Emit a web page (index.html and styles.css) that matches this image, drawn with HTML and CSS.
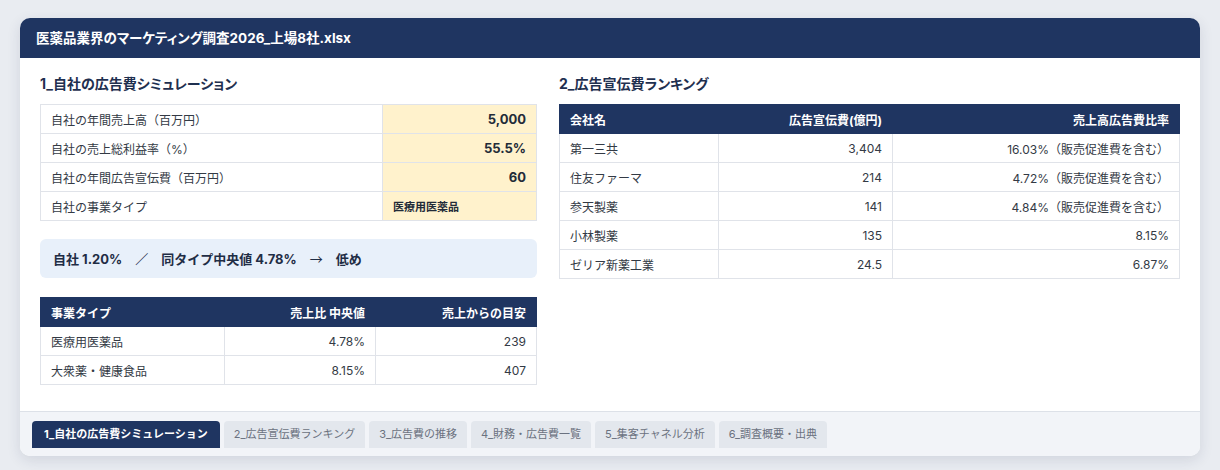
FILE: index.html
```html
<!DOCTYPE html>
<html lang="ja">
<head>
    <meta charset="UTF-8">
    <title>医薬品業界のマーケティング調査2026_上場8社.xlsx</title>
    <link rel="stylesheet" href="styles.css">
</head>
<body>
    <div class="book">
        <div class="book-title">医薬品業界のマーケティング調査2026_上場8社.xlsx</div>

        <div class="sheet">
            <div class="col-left">
                <h2>1_自社の広告費シミュレーション</h2>
                <table class="grid input-table">
                    <tr><td>自社の年間売上高（百万円）</td><td class="input num">5,000</td></tr>
                    <tr><td>自社の売上総利益率（%）</td><td class="input num">55.5%</td></tr>
                    <tr><td>自社の年間広告宣伝費（百万円）</td><td class="input num">60</td></tr>
                    <tr><td>自社の事業タイプ</td><td class="input small">医療用医薬品</td></tr>
                </table>

                <div class="callout">自社 1.20%<span class="sep">　／　</span>同タイプ中央値 4.78%<span class="sep arrow">　→　</span>低め</div>

                <table class="grid type-table">
                    <thead>
                        <tr><th>事業タイプ</th><th class="num">売上比 中央値</th><th class="num">売上からの目安</th></tr>
                    </thead>
                    <tbody>
                        <tr><td>医療用医薬品</td><td class="num">4.78%</td><td class="num">239</td></tr>
                        <tr><td>大衆薬・健康食品</td><td class="num">8.15%</td><td class="num">407</td></tr>
                    </tbody>
                </table>
            </div>

            <div class="col-right">
                <h2>2_広告宣伝費ランキング</h2>
                <table class="grid rank-table">
                    <thead>
                        <tr><th>会社名</th><th class="num">広告宣伝費(億円)</th><th class="num">売上高広告費比率</th></tr>
                    </thead>
                    <tbody>
                        <tr><td>第一三共</td><td class="num">3,404</td><td class="num">16.03%（販売促進費を含む）</td></tr>
                        <tr><td>住友ファーマ</td><td class="num">214</td><td class="num">4.72%（販売促進費を含む）</td></tr>
                        <tr><td>参天製薬</td><td class="num">141</td><td class="num">4.84%（販売促進費を含む）</td></tr>
                        <tr><td>小林製薬</td><td class="num">135</td><td class="num">8.15%</td></tr>
                        <tr><td>ゼリア新薬工業</td><td class="num">24.5</td><td class="num">6.87%</td></tr>
                    </tbody>
                </table>
            </div>
        </div>

        <div class="tabs">
            <span class="tab active">1_自社の広告費シミュレーション</span>
            <span class="tab">2_広告宣伝費ランキング</span>
            <span class="tab">3_広告費の推移</span>
            <span class="tab">4_財務・広告費一覧</span>
            <span class="tab">5_集客チャネル分析</span>
            <span class="tab">6_調査概要・出典</span>
        </div>
    </div>
</body>
</html>
```

FILE: styles.css
```css
body {
    margin: 0;
    padding: 18px 20px;
    background-color: #e9ecf1;
    font-family: Inter, "Noto Sans CJK JP", sans-serif;
    color: #333a45;
}

.book {
    background: #fff;
    border-radius: 10px;
    overflow: hidden;
    box-shadow: 0 4px 14px rgba(30, 45, 80, 0.12);
}

.book-title {
    height: 40px;
    line-height: 40px;
    padding: 0 16px;
    background-color: #1f3561;
    color: #fff;
    font-size: 13.5px;
    font-weight: 700;
    font-feature-settings: "palt";
}

.sheet {
    display: grid;
    grid-template-columns: 497px 621px;
    column-gap: 22px;
    padding: 16px 20px 26px;
}

h2 {
    margin: 0 0 10px;
    font-size: 14px;
    line-height: 20px;
    font-weight: 700;
    color: #1f3050;
    font-feature-settings: "palt";
}

.grid {
    width: 100%;
    border-collapse: collapse;
    table-layout: fixed;
    font-size: 12px;
}

.grid td {
    height: 28px;
    padding: 0 10px;
    border: 1px solid #e0e3e9;
    color: #333a45;
}

.grid th {
    height: 28px;
    padding: 0 10px;
    background-color: #1f3561;
    color: #fff;
    font-weight: 700;
    text-align: left;
    border: 1px solid #1f3561;
}

.grid .num {
    text-align: right;
}

.input-table td.input {
    width: 133px;
    background-color: #fff2cc;
    font-weight: 700;
    font-size: 13px;
    color: #222b38;
}

.input-table td.small {
    font-size: 11px;
}

.callout {
    margin: 18px 0 19px;
    height: 39px;
    line-height: 39px;
    padding: 0 13px;
    background-color: #e8f0fa;
    border-radius: 6px;
    font-size: 13px;
    font-weight: 700;
    color: #1f2d45;
}

.callout .sep {
    font-family: "Noto Sans CJK JP", sans-serif;
}

.callout .arrow {
    font-weight: 400;
}

.type-table th:nth-child(1) { width: 163px; }
.type-table th:nth-child(2) { width: 130px; }

.rank-table th:nth-child(1) { width: 138px; }
.rank-table th:nth-child(2) { width: 153px; }

.tabs {
    display: flex;
    gap: 4px;
    height: 35px;
    padding: 9px 12px 0;
    background-color: #f2f4f8;
    border-top: 1px solid #dde1e8;
}

.tab {
    height: 27px;
    line-height: 27px;
    padding: 0 10px;
    border-radius: 4px 4px 0 0;
    background-color: #e3e7ed;
    color: #6b7280;
    font-size: 11px;
    white-space: nowrap;
}

.tab.active {
    padding: 0 12px;
    background-color: #1f3561;
    color: #fff;
    font-weight: 700;
}
```
